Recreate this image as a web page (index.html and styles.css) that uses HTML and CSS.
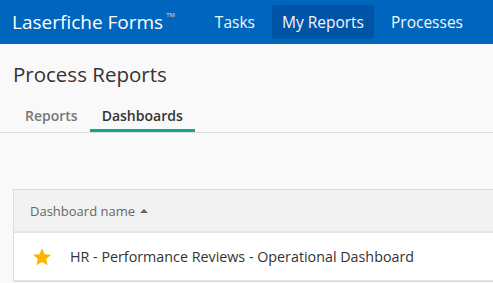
FILE: index.html
```html
<!DOCTYPE html>
<html lang="en">
<head>
  <meta charset="UTF-8" />
  <title>Process Reports</title>
  <link rel="stylesheet" href="styles.css">
</head>
<body>
  <header class="topbar">
    <div class="brand">Laserfiche Forms<sup>TM</sup></div>
    <nav class="nav">
      <a class="nav-item">Tasks</a>
      <a class="nav-item active">My Reports</a>
      <a class="nav-item">Processes</a>
    </nav>
  </header>
  <main class="content">
    <h1 class="title">Process Reports</h1>
    <div class="tabs">
      <a class="tab">Reports</a>
      <a class="tab active">Dashboards</a>
    </div>
    <div class="table">
      <div class="table-head">
        <span class="col-name">Dashboard name</span>
        <span class="sort"></span>
      </div>
      <div class="table-row">
        <svg class="star" width="20" height="20" viewBox="0 0 24 24">
          <path d="M12 1.5l3.1 7.1 7.7.7-5.8 5.1 1.7 7.6L12 18l-6.7 4 1.7-7.6-5.8-5.1 7.7-.7z" fill="#ffb400"/>
        </svg>
        <span class="row-name">HR - Performance Reviews - Operational Dashboard</span>
      </div>
    </div>
  </main>
</body>
</html>
```

FILE: styles.css
```css
html, body {
  margin: 0;
  height: 100%;
}
body {
  font-family: "Open Sans", sans-serif;
  background: #f9f9f9;
  color: #333;
  overflow: hidden;
}
.topbar {
  display: flex;
  align-items: center;
  height: 44px;
  background: #0066bd;
  color: #fff;
  padding: 0 12px;
}
.brand {
  font-size: 19px;
  white-space: nowrap;
}
.brand sup {
  font-size: 6px;
  vertical-align: 12px;
  margin-left: 3px;
  color: #cfe0f3;
}
.nav {
  display: flex;
  align-items: center;
  margin-left: 30px;
}
.nav-item {
  font-size: 15.5px;
  padding: 6px 10px;
  margin-right: 7px;
  border-radius: 3px;
  white-space: nowrap;
  color: #f2f6fb;
}
.nav-item.active {
  background: #0054a6;
}
.content {
  padding: 0 0 0 13px;
}
.title {
  font-size: 20.5px;
  font-weight: 400;
  margin: 0;
  padding-top: 16px;
  line-height: 28px;
  color: #333;
}
.tabs {
  display: flex;
  margin-left: -13px;
  padding-left: 13px;
  margin-top: 15px;
  border-bottom: 1px solid #ddd;
}
.tab {
  font-size: 14px;
  padding: 0 12px;
  line-height: 26px;
  color: #777;
  font-weight: 600;
  border-bottom: 3px solid transparent;
}
.tab.active {
  color: #333;
  border-bottom-color: #0fa98a;
}
.table {
  margin-top: 56px;
  border: 1px solid #ddd;
  border-right: none;
  background: #fff;
}
.table-head {
  display: flex;
  align-items: center;
  height: 41px;
  padding-left: 16px;
  background: #f2f2f2;
  border-bottom: 2px solid #e4e4e4;
  font-size: 13px;
  color: #666;
}
.sort {
  width: 0;
  height: 0;
  margin-left: 5px;
  border-left: 4px solid transparent;
  border-right: 4px solid transparent;
  border-bottom: 4px solid #666;
}
.table-row {
  display: flex;
  align-items: center;
  height: 47px;
  padding-left: 18px;
  border-bottom: 1px solid #e4e4e4;
  font-size: 14.3px;
  color: #333;
}
.star {
  margin-right: 18px;
}
```
